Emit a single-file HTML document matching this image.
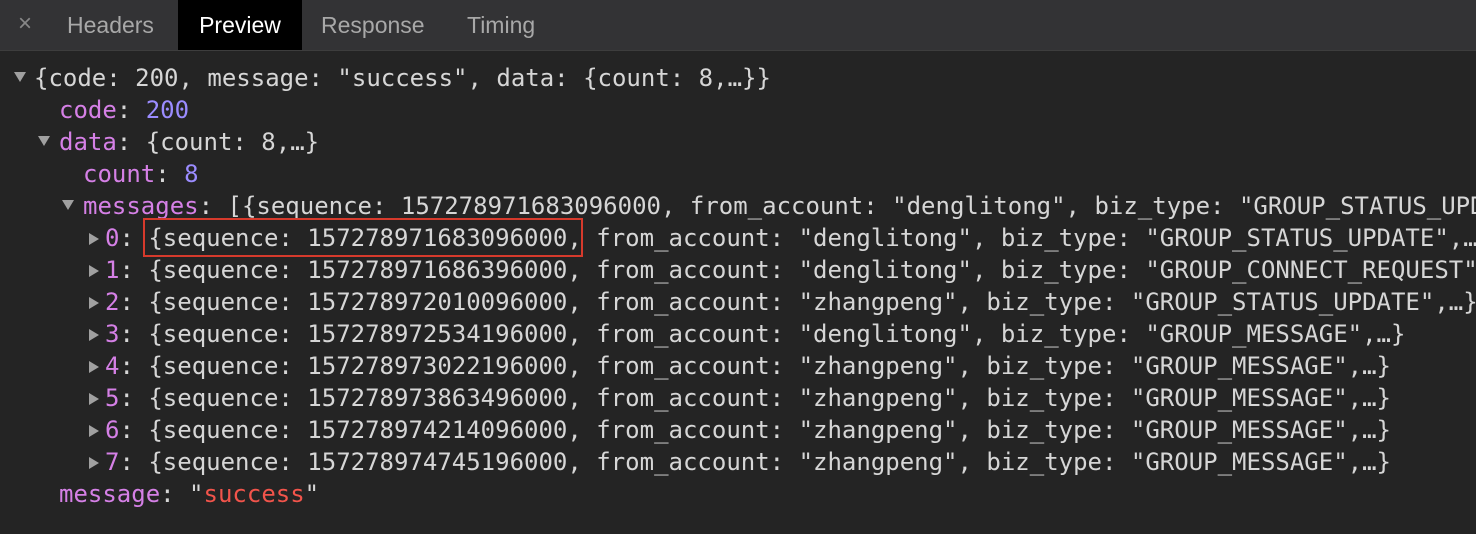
<!DOCTYPE html>
<html><head><style>
html,body{margin:0;width:1476px;height:534px;background:#242424;overflow:hidden;}
#w{position:relative;width:1476px;height:534px;overflow:hidden;font-family:"DejaVu Sans Mono","Liberation Mono",monospace;}
.tabs{height:50px;background:#333335;border-bottom:1px solid #3d3d3d;position:relative;font-family:"Liberation Sans",sans-serif;font-size:23px;color:#a8a8a8;}
.tabs span{position:absolute;top:12px;}
.tabs .act{background:#000;color:#fff;top:0;height:50px;line-height:50px;left:178px;width:124px;text-align:center;}
.l{position:absolute;font-size:24px;line-height:32px;color:#d6d6d6;white-space:pre;}
.k{color:#d580e6}.n{color:#9b8cff}.s{color:#f2544b}
.t{position:absolute;width:0;height:0;}
.d{border-left:6px solid transparent;border-right:6px solid transparent;border-top:10px solid #a0a0a0;}
.r{border-top:6px solid transparent;border-bottom:6px solid transparent;border-left:10px solid #a0a0a0;}
</style></head><body><div id="w">
<div class="tabs"><span style="left:18px;top:10px;font-size:24px;color:#888">×</span><span style="left:67px">Headers</span><span class="act">Preview</span><span style="left:321px">Response</span><span style="left:467px">Timing</span></div>
<div class="t d" style="left:14px;top:72px"></div>
<div class="l" style="left:34px;top:62px">{code: 200, message: "success", data: {count: 8,…}}</div>
<div class="l" style="left:59px;top:94px"><span class="k">code</span>: <span class="n">200</span></div>
<div class="t d" style="left:38px;top:136px"></div>
<div class="l" style="left:59px;top:126px"><span class="k">data</span>: {count: 8,…}</div>
<div class="l" style="left:83px;top:158px"><span class="k">count</span>: <span class="n">8</span></div>
<div class="t d" style="left:62px;top:200px"></div>
<div class="l" style="left:83px;top:190px"><span class="k">messages</span>: [{sequence: 157278971683096000, from_account: "denglitong", biz_type: "GROUP_STATUS_UPDATE",…</div>
<div class="t r" style="left:89px;top:233px"></div><div class="l" style="left:105px;top:222px"><span class="k">0</span>: {sequence: 157278971683096000, from_account: "denglitong", biz_type: "GROUP_STATUS_UPDATE",…</div>
<div class="t r" style="left:89px;top:265px"></div><div class="l" style="left:105px;top:254px"><span class="k">1</span>: {sequence: 157278971686396000, from_account: "denglitong", biz_type: "GROUP_CONNECT_REQUEST",…}</div>
<div class="t r" style="left:89px;top:297px"></div><div class="l" style="left:105px;top:286px"><span class="k">2</span>: {sequence: 157278972010096000, from_account: "zhangpeng", biz_type: "GROUP_STATUS_UPDATE",…}</div>
<div class="t r" style="left:89px;top:329px"></div><div class="l" style="left:105px;top:318px"><span class="k">3</span>: {sequence: 157278972534196000, from_account: "denglitong", biz_type: "GROUP_MESSAGE",…}</div>
<div class="t r" style="left:89px;top:361px"></div><div class="l" style="left:105px;top:350px"><span class="k">4</span>: {sequence: 157278973022196000, from_account: "zhangpeng", biz_type: "GROUP_MESSAGE",…}</div>
<div class="t r" style="left:89px;top:393px"></div><div class="l" style="left:105px;top:382px"><span class="k">5</span>: {sequence: 157278973863496000, from_account: "zhangpeng", biz_type: "GROUP_MESSAGE",…}</div>
<div class="t r" style="left:89px;top:425px"></div><div class="l" style="left:105px;top:414px"><span class="k">6</span>: {sequence: 157278974214096000, from_account: "zhangpeng", biz_type: "GROUP_MESSAGE",…}</div>
<div class="t r" style="left:89px;top:457px"></div><div class="l" style="left:105px;top:446px"><span class="k">7</span>: {sequence: 157278974745196000, from_account: "zhangpeng", biz_type: "GROUP_MESSAGE",…}</div>
<div class="l" style="left:59px;top:478px"><span class="k">message</span>: "<span class="s">success</span>"</div>
<div style="position:absolute;left:143px;top:218px;width:436px;height:35px;border:2px solid #d63a2c;"></div>
</div></body></html>
